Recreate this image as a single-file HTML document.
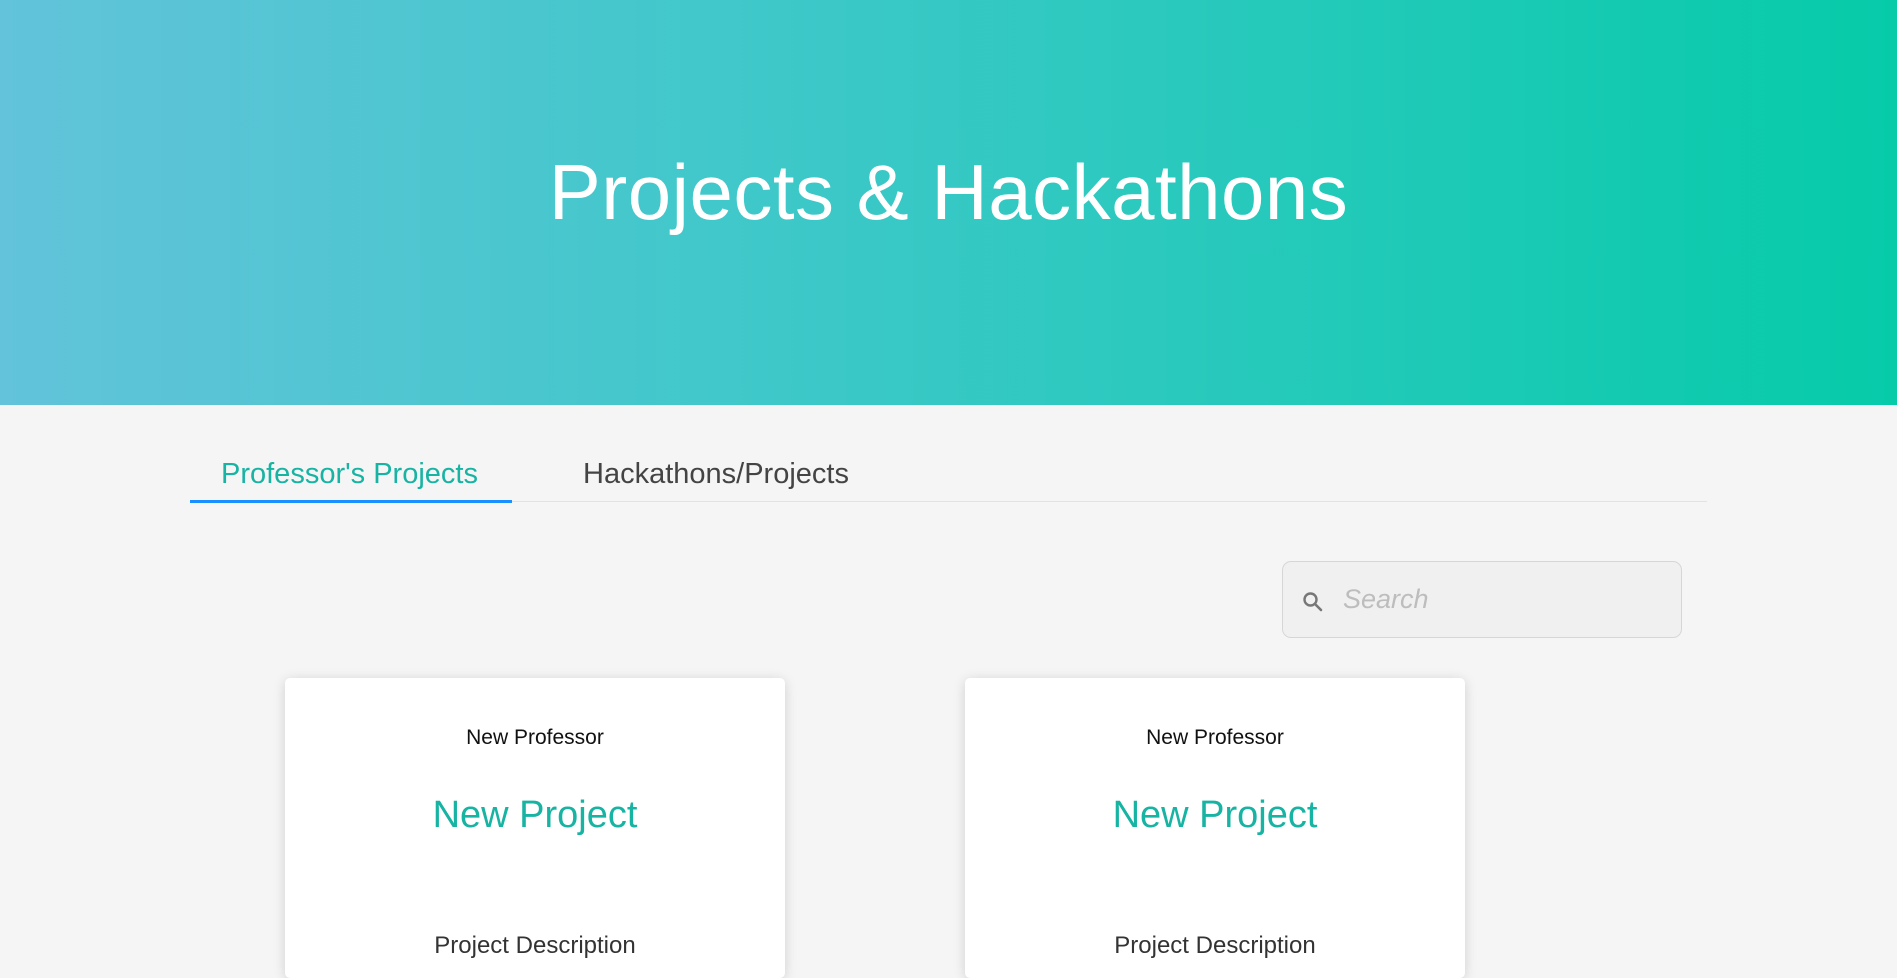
<!DOCTYPE html>
<html><head><meta charset="utf-8"><style>
*{margin:0;padding:0;box-sizing:border-box}
body{width:1897px;height:940px;overflow:hidden;background:#f5f5f5;font-family:"Liberation Sans",sans-serif;position:relative}
.hero{position:absolute;left:0;top:0;width:1897px;height:405px;background:linear-gradient(90deg,#62c3da 0%,#3fc8c9 40%,#06cba9 100%)}
.hero h1{position:absolute;left:0;right:0;top:147px;text-align:center;color:#fff;font-weight:normal;font-size:78px;line-height:90px;letter-spacing:0.5px}
.tabline{position:absolute;left:190px;top:501px;width:1517px;height:1px;background:#e3e3e3}
.tabact{position:absolute;left:190px;top:500px;width:322px;height:3px;background:#1890ff}
.tab{position:absolute;top:457px;font-size:29px;line-height:34px}
.search{position:absolute;left:1282px;top:561px;width:400px;height:77px;border:1px solid #d6d6d6;border-radius:9px;background:#f0f0f0}
.search span{position:absolute;left:60px;top:22px;font-size:27px;font-style:italic;color:#bdbdbd}
.card{position:absolute;top:678px;width:500px;height:300px;background:#fff;border-radius:5px;box-shadow:0 2px 12px rgba(0,0,0,.15);text-align:center}
.card .p{position:absolute;left:0;right:0;top:48px;font-size:21px;color:#111}
.card .t{position:absolute;left:0;right:0;top:116px;font-size:38px;color:#17b3a3}
.card .d{position:absolute;left:0;right:0;top:254px;font-size:24px;color:#333}
</style></head><body>
<div class="hero"><h1>Projects &amp; Hackathons</h1></div>
<div class="tabline"></div><div class="tabact"></div>
<div class="tab" style="left:221px;color:#17b3a3">Professor's Projects</div>
<div class="tab" style="left:583px;color:#444">Hackathons/Projects</div>
<div class="search">
<svg style="position:absolute;left:18px;top:28px" width="24" height="24" viewBox="0 0 24 24"><circle cx="9.5" cy="9.5" r="6" fill="none" stroke="#777" stroke-width="2.4"/><path d="M14 14l6 6" stroke="#777" stroke-width="2.6" stroke-linecap="round"/></svg>
<span>Search</span></div>
<div class="card" style="left:285px"><div class="p">New Professor</div><div class="t">New Project</div><div class="d">Project Description</div></div>
<div class="card" style="left:965px"><div class="p">New Professor</div><div class="t">New Project</div><div class="d">Project Description</div></div>
</body></html>
